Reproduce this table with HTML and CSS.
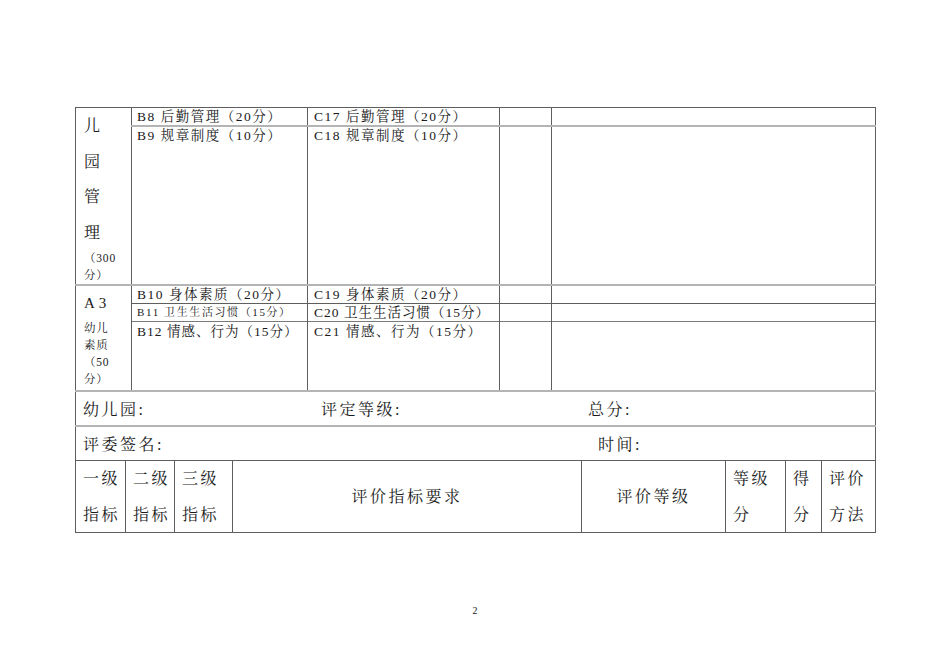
FILE: index.html
```html
<!DOCTYPE html>
<html lang="zh-CN">
<head>
<meta charset="utf-8">
<title>评价表</title>
<link rel="stylesheet" href="styles.css">
</head>
<body>
<div class="sheet">
  <table class="grid top">
    <colgroup>
      <col class="w56"><col class="w176"><col class="w192"><col class="w52"><col class="w324">
    </colgroup>
    <tr class="r1">
      <td rowspan="2" class="lvl1">
        <div class="big">儿</div><div class="big">园</div><div class="big">管</div><div class="big">理</div>
        <div class="small">（300</div><div class="small">分）</div>
      </td>
      <td class="item b">B8 后勤管理（20分）</td>
      <td class="item c">C17 后勤管理（20分）</td>
      <td></td><td></td>
    </tr>
    <tr class="r2 soft">
      <td class="item b">B9 规章制度（10分）</td>
      <td class="item c">C18 规章制度（10分）</td>
      <td></td><td></td>
    </tr>
    <tr class="r3 soft">
      <td rowspan="3" class="lvl1">
        <div class="a3">A3</div>
        <div class="small">幼儿</div><div class="small">素质</div><div class="small">（50</div><div class="small">分）</div>
      </td>
      <td class="item b">B10 身体素质（20分）</td>
      <td class="item c">C19 身体素质（20分）</td>
      <td></td><td></td>
    </tr>
    <tr class="r4">
      <td class="item b tiny">B11 卫生生活习惯（15分）</td>
      <td class="item c tight">C20 卫生生活习惯（15分）</td>
      <td></td><td></td>
    </tr>
    <tr class="r5 mid">
      <td class="item b tight">B12 情感、行为（15分）</td>
      <td class="item c">C21 情感、行为（15分）</td>
      <td></td><td></td>
    </tr>
  </table>
  <table class="grid bottom">
    <colgroup>
      <col class="w50"><col class="w49"><col class="w58"><col class="w349"><col class="w144"><col class="w60"><col class="w36"><col class="w54">
    </colgroup>
    <tr class="r6 soft">
      <td colspan="8" class="info"><span class="f1">幼儿园:</span><span class="f2">评定等级:</span><span>总分:</span></td>
    </tr>
    <tr class="r7 soft">
      <td colspan="8" class="info"><span class="f3">评委签名:</span><span>时间:</span></td>
    </tr>
    <tr class="r8">
      <td class="head">一级<br>指标</td>
      <td class="head">二级<br>指标</td>
      <td class="head">三级<br>指标</td>
      <td class="head center">评价指标要求</td>
      <td class="head center">评价等级</td>
      <td class="head">等级<br>分</td>
      <td class="head">得<br>分</td>
      <td class="head">评价<br>方法</td>
    </tr>
  </table>
  <div class="pagenum">2</div>
</div>
</body>
</html>
```

FILE: styles.css
```css
html, body {
  margin: 0;
  padding: 0;
  background: #ffffff;
}
body {
  font-family: "Liberation Serif", "Noto Serif CJK SC", "Noto Sans CJK SC", serif;
  color: #1a1a1a;
}
.sheet {
  width: 800px;
  padding: 107px 75px 0;
}
.grid {
  width: 800px;
  border-collapse: collapse;
  table-layout: fixed;
}
.grid td {
  border: 1px solid #5e5e5e;
  padding: 0;
  vertical-align: top;
}
.top td { border-bottom: none; }
.grid .soft > td { border-top: 2px solid #b4b4b4; }
.grid .mid > td { border-top: 1px solid #7a7a7a; }

.w56 { width: 56px; }
.w176 { width: 176px; }
.w192 { width: 192px; }
.w52 { width: 52px; }
.w324 { width: 324px; }
.w50 { width: 50px; }
.w49 { width: 49px; }
.w58 { width: 58px; }
.w349 { width: 349px; }
.w144 { width: 144px; }
.w60 { width: 60px; }
.w36 { width: 36px; }
.w54 { width: 54px; }

.r1 { height: 18px; }
.r2 { height: 157px; }
.r3 { height: 16px; }
.r4 { height: 18px; }
.r5 { height: 68px; }
.r6 { height: 35px; }
.r7 { height: 35px; }
.r8 { height: 70px; }

.grid td.lvl1 {
  padding-left: 8px;
}
.big {
  font-size: 16px;
  line-height: 35.5px;
}
.small {
  font-size: 11.5px;
  line-height: 17px;
  letter-spacing: 0.8px;
}
.a3 {
  font-size: 15px;
  line-height: 34px;
  letter-spacing: 4px;
}
.grid td.item {
  font-size: 13.5px;
  line-height: 17px;
  letter-spacing: 1.5px;
  white-space: nowrap;
}
.grid td.b { padding-left: 5px; }
.grid td.c { padding-left: 6px; }
.grid .r5 td.item { line-height: 20px; }
.grid td.item.tiny {
  font-size: 11px;
  letter-spacing: 1.6px;
}
.grid td.item.tight {
  letter-spacing: 1px;
}
.grid td.info {
  vertical-align: middle;
  padding-left: 7px;
  font-size: 16px;
  letter-spacing: 2.5px;
}
.info span { display: inline-block; }
.f1 { width: 238px; }
.f2 { width: 267px; }
.f3 { width: 515px; }
.grid td.head {
  vertical-align: middle;
  padding-left: 7px;
  font-size: 16px;
  line-height: 35.5px;
  letter-spacing: 2.5px;
}
.grid td.head.center {
  text-align: center;
  padding-left: 0;
}
.pagenum {
  margin-top: 72px;
  font-size: 10px;
  line-height: 12px;
  text-align: center;
}
```
